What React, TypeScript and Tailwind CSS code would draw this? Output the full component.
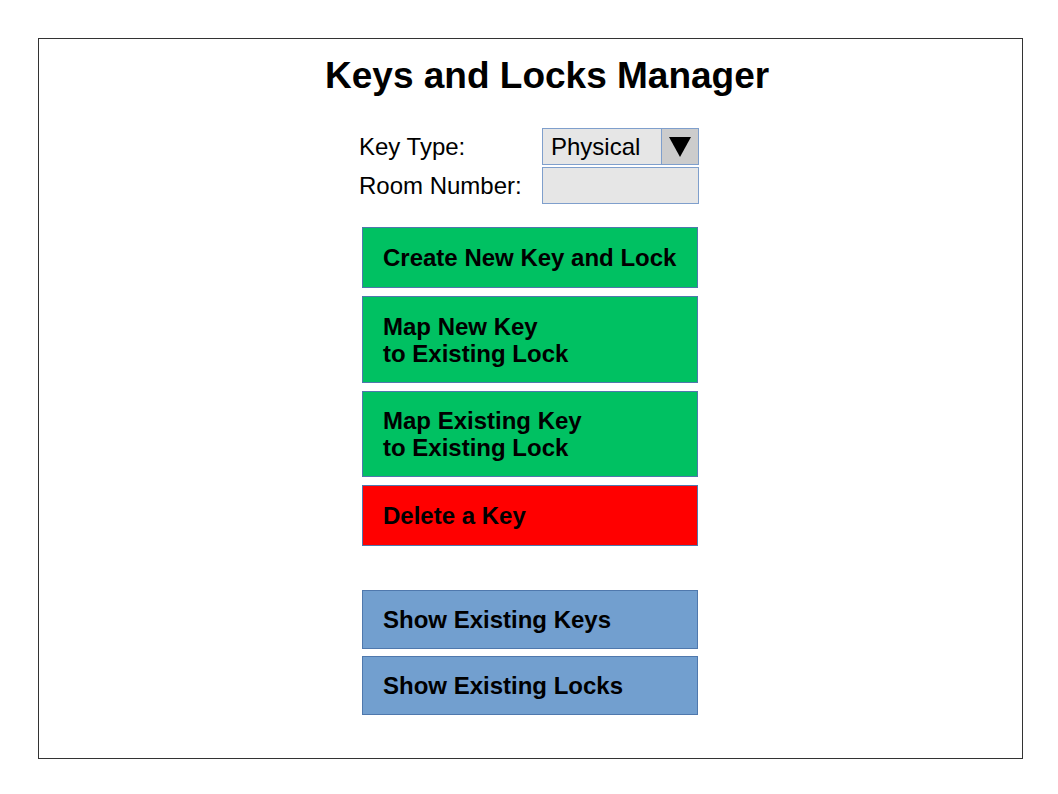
import { useState } from 'react';

const actions = [
  { id: 'create', lines: ['Create New Key and Lock'], color: 'bg-[#00c162]', h: 'h-[61px]' },
  { id: 'map-new', lines: ['Map New Key', 'to Existing Lock'], color: 'bg-[#00c162]', h: 'h-[87px]' },
  { id: 'map-existing', lines: ['Map Existing Key', 'to Existing Lock'], color: 'bg-[#00c162]', h: 'h-[86px]' },
  { id: 'delete', lines: ['Delete a Key'], color: 'bg-[#ff0000]', h: 'h-[61px]' },
];

const views = [
  { id: 'keys', label: 'Show Existing Keys' },
  { id: 'locks', label: 'Show Existing Locks' },
];

function ActionButton({ lines, color, h }: { lines: string[]; color: string; h: string }) {
  return (
    <button
      className={`${color} ${h} w-[336px] border border-[#4f78ad] pl-[20px] text-left text-[24px] leading-[27px] font-bold text-black`}
    >
      {lines.map(l => (
        <div key={l}>{l}</div>
      ))}
    </button>
  );
}

export default function App() {
  const [keyType] = useState('Physical');
  const [room, setRoom] = useState('');

  return (
    <div className="min-h-screen bg-white pt-[38px] pl-[38px] font-['Liberation_Sans',Arial,sans-serif] text-black">
      <div className="w-[985px] h-[721px] border border-[#333333]">
        <h1 className="mt-[18px] ml-[286px] text-[37px] leading-[37px] font-bold">Keys and Locks Manager</h1>

        <div className="ml-[320px] mt-[34px] w-[340px]">
          {/* form fields */}
          <div className="flex flex-col gap-[2px]">
            <div className="flex items-center h-[37px]">
              <label className="w-[183px] text-[24px] leading-none">Key Type:</label>
              <div className="flex h-[37px] w-[157px] border border-[#7f9fcc] bg-[#e6e6e6]">
                <span className="flex-1 pl-[8px] text-[24px] leading-[35px]">{keyType}</span>
                <span className="flex w-[37px] items-center justify-center border-l border-[#7f9fcc] bg-[#cccccc]">
                  <svg width="24" height="22" viewBox="0 0 24 22">
                    <polygon points="1,1 23,1 12,21" fill="#000" />
                  </svg>
                </span>
              </div>
            </div>
            <div className="flex items-center h-[37px]">
              <label className="w-[183px] text-[24px] leading-none">Room Number:</label>
              <input
                value={room}
                onChange={e => setRoom(e.target.value)}
                className="h-[37px] w-[157px] border border-[#7f9fcc] bg-[#e6e6e6] px-[8px] text-[24px] outline-none"
              />
            </div>
          </div>

          {/* actions */}
          <div className="ml-[3px] mt-[23px] flex flex-col gap-[8px]">
            {actions.map(a => (
              <ActionButton key={a.id} lines={a.lines} color={a.color} h={a.h} />
            ))}
          </div>

          <div className="ml-[3px] mt-[44px] flex flex-col gap-[7px]">
            {views.map(v => (
              <ActionButton key={v.id} lines={[v.label]} color="bg-[#729fcf]" h="h-[59px]" />
            ))}
          </div>
        </div>
      </div>
    </div>
  );
}
